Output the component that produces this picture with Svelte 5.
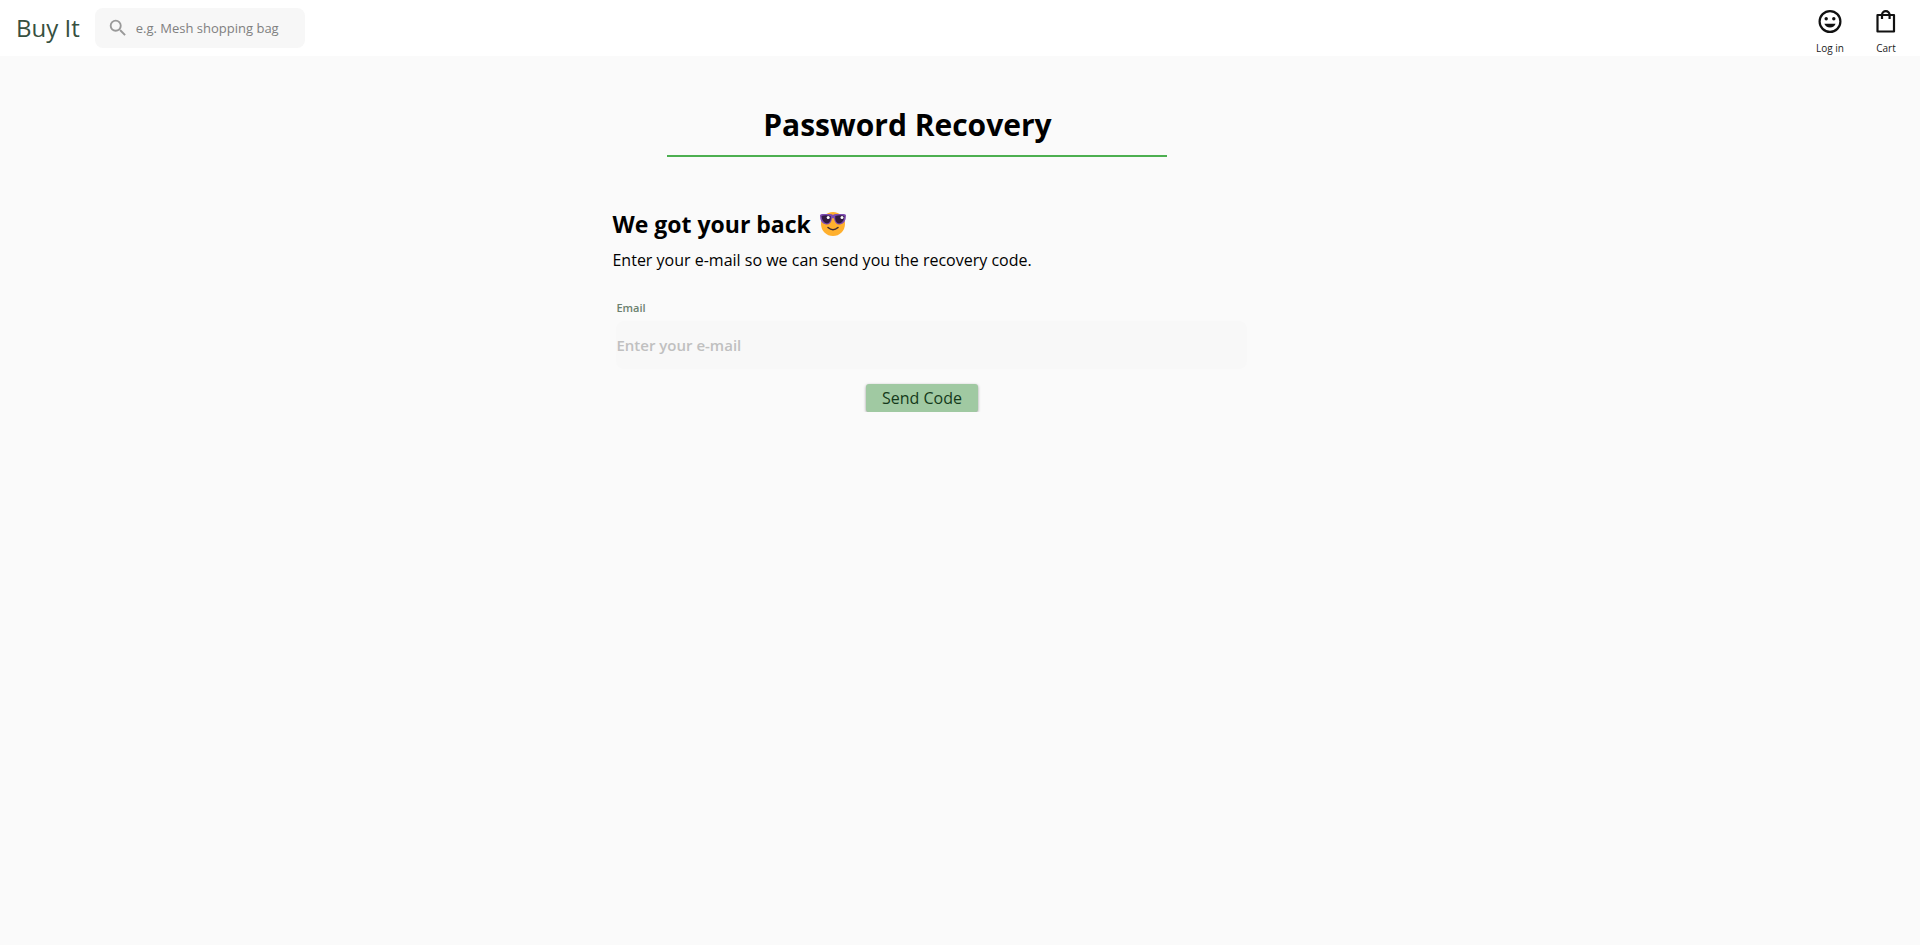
<script>
  let query = $state('');
  let email = $state('');
</script>

<div class="page">
  <header>
    <a class="brand" href="#home">Buy It</a>
    <label class="search">
      <svg viewBox="0 0 24 24" width="22" height="22" aria-hidden="true">
        <path d="M15.5 14h-.79l-.28-.27A6.47 6.47 0 0 0 16 9.5 6.5 6.5 0 1 0 9.5 16c1.61 0 3.09-.59 4.23-1.57l.27.28v.79l5 4.99L20.49 19l-4.99-5zm-6 0C7.01 14 5 11.99 5 9.5S7.01 5 9.5 5 14 7.01 14 9.5 11.99 14 9.5 14z" />
      </svg>
      <input type="search" aria-label="Search products" placeholder="e.g. Mesh shopping bag" bind:value={query} />
    </label>
    <nav>
      <a href="#login">
        <svg viewBox="0 0 28 28" width="28" height="28" aria-hidden="true">
          <circle cx="14" cy="13.500" r="10.4" fill="none" stroke="#111" stroke-width="2.2" />
          <circle cx="10.2" cy="10.700" r="1.7" />
          <circle cx="17.8" cy="10.700" r="1.7" />
          <path d="M8.4 15.700h11.2c-.7 2.4-2.800 3.800-5.600 3.800s-4.900-1.400-5.600-3.800z" />
        </svg>
        <span>Log in</span>
      </a>
      <a href="#cart">
        <svg viewBox="0 0 28 28" width="28" height="28" aria-hidden="true">
          <path d="M5.500 7h16.500v16.500H5.500zM10 11V7a3.800 3.800 0 0 1 7.600 0V11" fill="none" stroke="#111" stroke-width="2.200" stroke-linejoin="round" />
        </svg>
        <span>Cart</span>
      </a>
    </nav>
  </header>

  <main>
    <div class="content">
      <h1>Password Recovery</h1>
      <h2>
        We got your back
        <svg viewBox="0 0 28 28" width="28" height="28" role="img" aria-label="Cool face">
          <circle cx="14" cy="14" r="12" fill="#ffb02e" />
          <path d="M1 5.500Q1 4 3 4h8q2 0 3 1 1-1 3-1h8q2 0 2 1.500 0 8-6 9-5 .5-6-6-1-1-2 0-1 6.500-6 6-6-1-6-9z" fill="#7d4bb0" />
          <path d="M2.500 6q4-1.500 9.200 0 .8 7-3.700 7.400-4.800-.2-5.500-7.400zM16.300 6q5-1.500 9.200 0-.6 7.200-5.500 7.400-4.500-.4-3.700-7.400z" fill="#321b41" />
          <path d="M9 17.500q5 4.500 10 0" fill="none" stroke="#402a32" stroke-width="1.500" stroke-linecap="round" />
          <circle cx="9.200" cy="7.400" r="1.500" fill="#fff" />
          <circle cx="23" cy="7.400" r="1.500" fill="#fff" />
        </svg>
      </h2>
      <p>Enter your e-mail so we can send you the recovery code.</p>
      <form onsubmit={(event) => event.preventDefault()}>
        <label for="email">Email</label>
        <input id="email" type="email" placeholder="Enter your e-mail" bind:value={email} />
        <button type="submit">Send Code</button>
      </form>
    </div>
  </main>
</div>

<style>
  :global(body) {
    margin: 0;
    background: #fafafa;
  }
  .page {
    font-family: 'Open Sans', 'Noto Sans', sans-serif;
    color: #000;
  }
  header {
    display: flex;
    align-items: center;
    height: 56px;
    padding: 0 20px 0 16px;
    background: #fff;
  }
  a {
    text-decoration: none;
  }
  .brand {
    margin-right: 15px;
    font-size: 24px;
    font-weight: 500;
    line-height: 32px;
    color: #37503f;
  }
  .search {
    display: flex;
    align-items: center;
    box-sizing: border-box;
    width: 210px;
    height: 40px;
    padding: 0 12px;
    border-radius: 8px;
    background: #f7f7f7;
  }
  .search svg {
    flex: none;
    margin-right: 7px;
    fill: #999;
  }
  input {
    min-width: 0;
    padding: 0;
    border: 0;
    outline: 0;
    font-family: inherit;
  }
  .search input {
    flex: 1;
    background: transparent;
    font-size: 13px;
  }
  .search input::placeholder {
    color: #808080;
  }
  nav {
    display: flex;
    align-self: flex-start;
    gap: 28px;
    margin-left: auto;
    padding-top: 8px;
  }
  nav a {
    display: flex;
    flex-direction: column;
    align-items: center;
    color: #222;
    font-size: 10px;
    line-height: 12px;
  }
  nav svg {
    margin-bottom: 6px;
    fill: #111;
  }
  main {
    display: grid;
    grid-template-columns: 51fr minmax(0, 635px) 56fr;
  }
  .content {
    grid-column: 2;
    padding-top: 46px;
  }
  h1 {
    width: 500px;
    max-width: 100%;
    box-sizing: border-box;
    margin: 0 0 47px 55px;
    padding: 0 20px 7px 0;
    border-bottom: 2px solid #4caf50;
    font-size: 30px;
    font-weight: 700;
    line-height: 46px;
    text-align: center;
  }
  h2 {
    display: flex;
    align-items: center;
    gap: 8px;
    margin: 0 0 4px;
    font-size: 23px;
    font-weight: 700;
    line-height: 40px;
  }
  p {
    margin: 0 0 28px;
    font-size: 16px;
    line-height: 24px;
  }
  form {
    display: flex;
    flex-direction: column;
    padding-left: 4px;
  }
  label[for='email'] {
    margin-bottom: 5px;
    font-size: 11px;
    font-weight: 600;
    line-height: 16px;
    color: #6b806e;
  }
  #email {
    height: 48px;
    border-radius: 8px;
    background: #f8f8f8;
    font-size: 15px;
    font-weight: 600;
  }
  #email::placeholder {
    color: #c0c0c0;
  }
  button {
    align-self: center;
    margin: 15px 20px 0 0;
    padding: 0 16px;
    border: 0;
    border-radius: 3px;
    background: #a0c9a2;
    box-shadow: 0 1px 3px rgba(0, 0, 0, 0.4);
    color: #143a1a;
    font-family: inherit;
    font-size: 16px;
    line-height: 28px;
  }
</style>
